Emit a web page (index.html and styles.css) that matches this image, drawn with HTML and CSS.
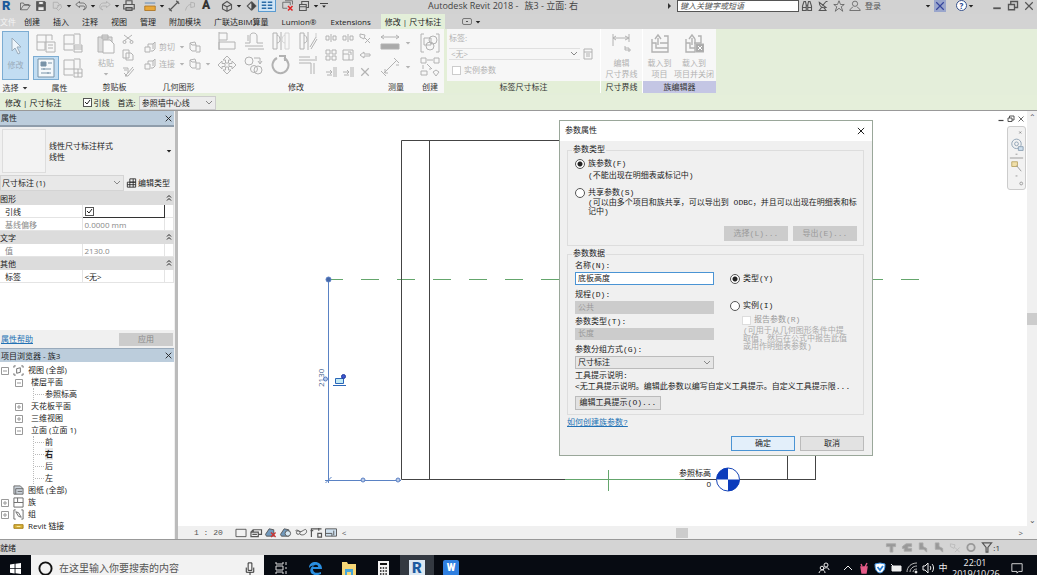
FILE: index.html
```html
<!DOCTYPE html>
<html lang="zh-CN">
<head>
<meta charset="utf-8">
<title>Autodesk Revit 2018 - 族3 - 立面: 右</title>
<link rel="stylesheet" href="styles.css">
</head>
<body>
<svg class="sprite" aria-hidden="true">
  <symbol id="i-open" viewBox="0 0 16 16"><path d="M2 13V4h4l1 2h6v2M2 13h9l4-6H6z"/></symbol>
  <symbol id="i-save" viewBox="0 0 16 16"><path d="M2 2h11l1 1v11H2z" fill="#555"/><path d="M5 2h6v4H5zM4 9h8v5H4z" fill="#eee"/></symbol>
  <symbol id="i-sync" viewBox="0 0 16 16"><path d="M3 3h6l2 3-3 5H3zM8 8l5-2 1 4-4 4-3-3"/></symbol>
  <symbol id="i-undo" viewBox="0 0 16 16"><path d="M6 2L1 6l5 4V8h5c3 0 3 4 0 5 6 0 5-9-1-9H6z"/></symbol>
  <symbol id="i-redo" viewBox="0 0 16 16"><path d="M10 2l5 4-5 4V8H5c-3 0-3 4 0 5-6 0-5-9 1-9h4z"/></symbol>
  <symbol id="i-print" viewBox="0 0 16 16"><path d="M4 6V1h8v5M1 6h14v6H1zM4 10h8v4H4z" stroke-width="1.6"/></symbol>
  <symbol id="i-measure" viewBox="0 0 16 16"><path d="M1 4h14" stroke="#3b70a8"/><path d="M1 8h14v6H1z" fill="#e8a83a" stroke="#a66b18"/></symbol>
  <symbol id="i-dim" viewBox="0 0 16 16"><path d="M2 14L14 2M1 11l4 4M11 1l4 4" stroke-width="1.6"/></symbol>
  <symbol id="i-tag" viewBox="0 0 16 16"><path d="M2 14c1-5 4-8 7-8M9 3l5 1v5l-5 1z"/></symbol>
  <symbol id="i-cube" viewBox="0 0 16 16"><path d="M2 6l6-4 6 4v6l-6 3-6-3zM8 8v6M2 6l6 3 6-3" stroke-width="1.5"/></symbol>
  <symbol id="i-section" viewBox="0 0 16 16"><path d="M8 3l5 5-5 5-5-5z" stroke-width="1.5"/><path d="M9 2l6 6-6 6z" fill="#444"/></symbol>
  <symbol id="i-lines" viewBox="0 0 16 16"><path d="M1 3h6M1 7h6M1 11h6M9 3h6M9 7h6M9 11h6" stroke="#2b6ca8" stroke-width="2"/></symbol>
  <symbol id="i-closewin" viewBox="0 0 16 16"><path d="M1 3h10v4M1 3v8h6M4 1h10v5"/><path d="M8 8l6 6M14 8l-6 6" stroke="#d22" stroke-width="2"/></symbol>
  <symbol id="i-switch" viewBox="0 0 16 16"><path d="M2 6h9v8H2zM5 6V2h9v8h-3M2 9h9" stroke-width="1.4"/></symbol>
  <symbol id="i-down" viewBox="0 0 8 8"><path d="M1 2.5h6L4 6z" fill="currentColor" stroke="none"/></symbol>
  <symbol id="i-up2" viewBox="0 0 8 8"><path d="M2 3.500L4 1.500l2 2M2 6.500l2-2 2 2"/></symbol>
  <symbol id="i-bino" viewBox="0 0 16 16"><path d="M2 14V8l2-6h2l1 5v7zM14 14V8l-2-6h-2L9 7v7zM7 7h2M2 10h5M9 10h5" stroke-width="1.5"/></symbol>
  <symbol id="i-dish" viewBox="0 0 16 16"><path d="M3 3c0 6 4 8 9 7zM7 8l5-6M12 2h2M6 10l-3 4h9l-3-4" stroke-width="1.4"/></symbol>
  <symbol id="i-star" viewBox="0 0 16 16"><path d="M8 1l2 5h5l-4 3 2 6-5-4-5 4 2-6-4-3h5z"/></symbol>
  <symbol id="i-user" viewBox="0 0 16 16"><circle cx="8" cy="5" r="3.5"/><path d="M5 9c0 2-4 2-4 5h14c0-3-4-3-4-5"/></symbol>
  <symbol id="i-x" viewBox="0 0 16 16"><path d="M3 3l10 10M13 3L3 13" stroke-width="1.6"/></symbol>
  <symbol id="i-restore" viewBox="0 0 16 16"><path d="M2 6h8v7H2zM5 6V2h9v8h-4" stroke-width="1.8"/></symbol>
  <symbol id="i-min" viewBox="0 0 16 16"><path d="M3 11h10" stroke-width="2.4"/></symbol>
  <symbol id="i-cursor" viewBox="0 0 20 20"><path d="M6 2v13l3-3 3 6 2-1-3-6h4z" fill="#eef5fb"/></symbol>
  <symbol id="i-typeprop" viewBox="0 0 20 20"><path d="M1 2h9v7H1zM10 2h6v5M1 9v8h8V9M10 9h9v10h-9zM12 12h5M12 15h5"/></symbol>
  <symbol id="i-famcat" viewBox="0 0 20 20"><path d="M1 2h10v9H1zM11 1h6v10M1 11v6h9M11 12h8v7h-8zM11 14h8M11 16h8"/></symbol>
  <symbol id="i-props" viewBox="0 0 20 20"><path d="M2 1h16v18H2z" fill="#f4f8fb"/><path d="M5 4h5v4H5z" fill="#7893a8"/><path d="M12 5h4M5 11h10M5 15h10M8 10v2M12 14v2"/></symbol>
  <symbol id="i-famtype" viewBox="0 0 20 20"><path d="M1 2h10v9H1zM11 1h6v9M1 11v6h9M11 11h8v8h-8zM15 11v8M11 15h8"/></symbol>
  <symbol id="i-paste" viewBox="0 0 20 20"><path d="M2 3h14v15H2zM6 1h6v4H6z" fill="#ddd"/><path d="M7 6h7l4 4v9H7z" fill="#fafafa"/></symbol>
  <symbol id="i-cut" viewBox="0 0 12 12"><path d="M2 2l8 6M10 2L2 8"/><circle cx="2.500" cy="9" r="1.500"/><circle cx="9.500" cy="9" r="1.500"/></symbol>
  <symbol id="i-copyc" viewBox="0 0 12 12"><path d="M1 1h6v8H1zM4 4h5l2 2v5H4z" fill="#f8f8f8"/></symbol>
  <symbol id="i-calc" viewBox="0 0 12 12"><path d="M2 1h8v10H2zM2 4h8M4 6h4M4 8h4"/></symbol>
  <symbol id="i-match" viewBox="0 0 12 12"><path d="M1 3h5v5M2 5h3M11 2L5 9l-2 2h3l6-7M2 8l3 3"/></symbol>
  <symbol id="i-cope" viewBox="0 0 12 12"><path d="M4 3h5l2-2v7L9 10H7M4 3v3M1 6h5v5H1zM9 3v5"/></symbol>
  <symbol id="i-join" viewBox="0 0 12 12"><path d="M1 2l5-1 1 3v6H3L1 8zM7 5h4v6H7M1 2l2 2h4"/></symbol>
  <symbol id="i-align" viewBox="0 0 20 20"><path d="M2 1v18M2 2h8v7H2M2 11h16v7H2z"/></symbol>
  <symbol id="i-offset" viewBox="0 0 20 20"><path d="M1 12h5V5c0-4 7-4 7 0v7h6M1 15h18M4 18h16M4 10V4"/></symbol>
  <symbol id="i-mirror" viewBox="0 0 20 20"><path d="M2 2v16h4V2zM6 4c4 1 4 8 0 8M10 1v18"/><path d="M18 2v16h-4V2zM14 4c-4 1-4 8 0 8" stroke="#d4d4d4"/></symbol>
  <symbol id="i-mirrord" viewBox="0 0 20 20"><path d="M2 2v16h4V2zM6 4c4 1 4 8 0 8M10 1v18M18 6l-6 10M19 8l-6 10"/><path d="M18 2v5" stroke="#ccc"/></symbol>
  <symbol id="i-move" viewBox="0 0 20 20"><path d="M10 1l4 4h-2.500v3h-3V5H6zM10 19l4-4h-2.500v-3h-3v3H6zM1 10l4-4v2.500h3v3H5V14zM19 10l-4-4v2.500h-3v3h3V14z"/></symbol>
  <symbol id="i-copy" viewBox="0 0 20 20"><circle cx="5" cy="6" r="4"/><path d="M10 3h6v5M14 6l2 3 2-3"/><circle cx="10" cy="14" r="3.500"/><circle cx="14" cy="15" r="4"/></symbol>
  <symbol id="i-rotate" viewBox="0 0 20 20"><path d="M6 3a8 8 0 1 0 7 0M8 1h6v5" stroke-width="2"/></symbol>
  <symbol id="i-trim" viewBox="0 0 20 20"><path d="M1 5h18M1 8h12v11M16 8v11M1 2h11M18 1v3"/></symbol>
  <symbol id="i-split" viewBox="0 0 12 12"><path d="M1 4h3v4H1zM8 4h3v4H8zM6 2v8"/></symbol>
  <symbol id="i-pin" viewBox="0 0 12 12"><path d="M1 2l5 1-1 4-4-2zM6 6l5 5M11 6l-5 5"/></symbol>
  <symbol id="i-array" viewBox="0 0 12 12"><path d="M1 1h4v4H1zM7 1h4v4H7zM1 7h4v4H1zM7 7h4v4H7z"/></symbol>
  <symbol id="i-edittype" viewBox="0 0 12 12"><path d="M1 5h10v6H1zM1 8h10M4 5v6M8 1v10M4 1h7v4H4z"/></symbol>
  <symbol id="i-scale" viewBox="0 0 12 12"><path d="M1 1h10v10H1zM1 5h6v6M6 3h3v3"/></symbol>
  <symbol id="i-left" viewBox="0 0 12 12"><path d="M1 6l4-3v2h6v2H5v2z"/></symbol>
  <symbol id="i-ext" viewBox="0 0 12 12"><path d="M1 6h6M5 4l2 2-2 2M9 1v10M11 1v10M2 9h5"/></symbol>
  <symbol id="i-meas" viewBox="0 0 20 20"><path d="M1 4h18M4 2L1 4l3 2M16 2l3 2-3 2"/><path d="M1 11h18v5H1z" fill="#aaa"/></symbol>
  <symbol id="i-mdim" viewBox="0 0 20 20"><path d="M3 17L17 3M1 14l5 5M14 1l5 5M16 8l3 0M5 12v4h3"/></symbol>
  <symbol id="i-group" viewBox="0 0 20 20"><path d="M4 1H1v18h3M16 1h3v18h-3M4 5h7v7H4z"/><circle cx="13" cy="7" r="4"/><circle cx="10" cy="13" r="4"/></symbol>
  <symbol id="i-similar" viewBox="0 0 20 20"><path d="M1 1h5v5H1zM14 1h5v5h-5zM7 3h6M7 7l5 5M3 8v4M1 14h6v4H1zM10 13v-2M13 15l3-2 3 2-3 4z"/></symbol>
  <symbol id="i-witness" viewBox="0 0 20 20"><path d="M1 1v12M17 1v8M1 5h16M4 3L1 5l3 2M13 3l4 2-4 2M13 15h4v4M13 13v4h6"/></symbol>
  <symbol id="i-load" viewBox="0 0 20 20"><path d="M2 6v13h16V6M14 3h4v7h-8M2 10h4v5h12M8 12V5M5 6l3-4 3 4" stroke-width="1.4"/></symbol>
  <symbol id="i-loadx" viewBox="0 0 20 20"><path d="M2 6v13h9V6M14 3h3v7h-7M2 10h4v5h5M8 12V5M5 6l3-4 3 4" stroke-width="1.4"/><path d="M12 11h8v8h-8z" fill="#aaa"/><path d="M14 13l4 4M18 13l-4 4" stroke="#fff"/></symbol>
  <symbol id="i-plus" viewBox="0 0 8 8"><path d="M.5.5h7v7h-7zM2 4h4M4 2v4"/></symbol>
  <symbol id="i-minus" viewBox="0 0 8 8"><path d="M.5.5h7v7h-7zM2 4h4"/></symbol>
  <symbol id="i-views" viewBox="0 0 12 12"><path d="M1 3V1h2M9 1h2v2M11 9v2H9M3 11H1V9M4 4l4-1v5l-4 1z"/></symbol>
  <symbol id="i-sheets" viewBox="0 0 12 12"><path d="M1 1h7l3 3v6H1zM3 10V4h8M5 7h5" fill="#ccd4dc"/></symbol>
  <symbol id="i-fam" viewBox="0 0 12 12"><path d="M1 1h10v10H1zM5 1v5h6M1 6h4"/></symbol>
  <symbol id="i-grp" viewBox="0 0 12 12"><path d="M3 1H1v10h2M9 1h2v10H9M3 3l3 1 3 5-3-1z"/></symbol>
  <symbol id="i-link" viewBox="0 0 12 12"><path d="M1 4h10v4H1z" fill="#d8b23a" stroke="#a57f18"/><path d="M4 6h4" stroke="#fff0a8"/></symbol>
  <symbol id="i-paper" viewBox="0 0 14 12"><path d="M1.500 2.500h11v8h-11z" fill="#f2f2f2"/></symbol>
  <symbol id="i-box" viewBox="0 0 14 12"><path d="M1.500 5.500h8v5h-8zM4 5V3h9v5h-3M4 3l-2 2M3 8h5" stroke-width="1.300"/></symbol>
  <symbol id="i-shade" viewBox="0 0 14 12"><path d="M1 8l4-6 5 1v7H2z" fill="#7199bd"/><path d="M7 6l5 5M12 6l-5 5" stroke="#c33" stroke-width="1.500"/></symbol>
  <symbol id="i-crop" viewBox="0 0 14 12"><path d="M1 8l4-6 5 1v7H2z" fill="#7199bd"/><circle cx="9" cy="7" r="3" fill="#d7e9f5"/></symbol>
  <symbol id="i-glass" viewBox="0 0 14 12"><path d="M1 4c3-2 3 2 6 1s5-4 6-1-4 6-7 4"/><circle cx="4" cy="6" r="2"/></symbol>
  <symbol id="i-region" viewBox="0 0 14 12"><path d="M2 11V2h11M1 4h3M10 1v3M9 7h4v4H9z" stroke-width="1.300"/></symbol>
  <symbol id="i-screen" viewBox="0 0 14 12"><path d="M1 2h12v8H1z" fill="#cfe0ee"/><path d="M1 7h7v3M10 4v5"/></symbol>
  <symbol id="i-filter" viewBox="0 0 12 12"><path d="M1 1h10L7 6v5H5V6z" stroke-width="1.300"/></symbol>
  <symbol id="i-fsel" viewBox="0 0 12 12"><path d="M1 2h10v3H8v6H5V5H1z" fill="#999" stroke="#aaa"/></symbol>
  <symbol id="i-under" viewBox="0 0 12 12"><path d="M1 5l4-3h6v3H7v2h4v3H3V7H1z" fill="#999" stroke="#aaa"/></symbol>
  <symbol id="i-pins" viewBox="0 0 12 12"><path d="M2 1h4v4l4 2v4L7 8H2z" fill="#999" stroke="#aaa"/></symbol>
  <symbol id="i-ring" viewBox="0 0 12 12"><circle cx="6" cy="6" r="4" stroke="#999" stroke-width="2"/></symbol>
</svg>

<div class="app">
  <header class="titlebar">
    <div class="quick">
      <span class="logo">R</span>
      <button class="qb" aria-label="打开"><svg><use href="#i-open"/></svg></button>
      <button class="qb" aria-label="保存"><svg><use href="#i-save"/></svg></button>
      <button class="qb dim" aria-label="同步"><svg><use href="#i-sync"/></svg></button>
      <svg class="arr"><use href="#i-down"/></svg>
      <button class="qb" aria-label="放弃"><svg><use href="#i-undo"/></svg></button>
      <svg class="arr"><use href="#i-down"/></svg>
      <button class="qb dim" aria-label="重做"><svg><use href="#i-redo"/></svg></button>
      <svg class="arr"><use href="#i-down"/></svg>
      <button class="qb" aria-label="打印"><svg><use href="#i-print"/></svg></button>
      <i class="sep"></i>
      <button class="qb" aria-label="测量"><svg><use href="#i-measure"/></svg></button>
      <svg class="arr"><use href="#i-down"/></svg>
      <button class="qb" aria-label="尺寸"><svg><use href="#i-dim"/></svg></button>
      <button class="qb dim" aria-label="标记"><svg><use href="#i-tag"/></svg></button>
      <button class="qb text-a">A</button>
      <i class="sep"></i>
      <button class="qb" aria-label="三维"><svg><use href="#i-cube"/></svg></button>
      <svg class="arr"><use href="#i-down"/></svg>
      <button class="qb" aria-label="剖面"><svg><use href="#i-section"/></svg></button>
      <button class="qb on" aria-label="细线"><svg><use href="#i-lines"/></svg></button>
      <i class="sep"></i>
      <button class="qb" aria-label="关闭隐藏窗口"><svg><use href="#i-closewin"/></svg></button>
      <button class="qb" aria-label="切换窗口"><svg><use href="#i-switch"/></svg></button>
      <svg class="arr"><use href="#i-down"/></svg>
      <svg class="arr more"><use href="#i-down"/></svg>
    </div>
    <h1 class="app-title"><span>Autodesk Revit 2018 -</span><span>族3 - 立面: 右</span></h1>
    <div class="info">
      <i class="tri"></i>
      <input class="find" type="text" placeholder="键入关键字或短语" aria-label="搜索">
      <button class="qb" aria-label="查找"><svg><use href="#i-bino"/></svg></button>
      <button class="qb" aria-label="通讯中心"><svg><use href="#i-dish"/></svg></button>
      <button class="qb" aria-label="收藏夹"><svg><use href="#i-star"/></svg></button>
      <button class="qb" aria-label="用户"><svg><use href="#i-user"/></svg></button>
      <button class="login">登录</button>
      <svg class="arr"><use href="#i-down"/></svg>
      <button class="qb exch" aria-label="Exchange"><svg><use href="#i-x"/></svg></button>
      <button class="help">?</button>
      <svg class="arr"><use href="#i-down"/></svg>
      <div class="winctl">
        <button class="qb" aria-label="最小化"><svg><use href="#i-min"/></svg></button>
        <button class="qb" aria-label="还原"><svg><use href="#i-restore"/></svg></button>
        <button class="qb" aria-label="关闭"><svg><use href="#i-x"/></svg></button>
      </div>
    </div>
  </header>

  <nav class="tabs">
    <button class="file">文件</button><button>创建</button><button>插入</button><button>注释</button><button>视图</button><button>管理</button><button>附加模块</button><button>广联达BIM算量</button><button>Lumion®</button><button class="ext">Extensions</button><button class="active">修改 | 尺寸标注</button>
    <button class="tabmode" aria-label="最小化功能区"><i></i><svg class="arr"><use href="#i-down"/></svg></button>
  </nav>

  <section class="ribbon">
    <div class="panel p-select"><div class="body"><button class="modify"><svg class="big"><use href="#i-cursor"/></svg>修改</button></div><h2>选择 <svg class="arr"><use href="#i-down"/></svg></h2></div>
    <div class="panel p-props"><div class="body grid2">
      <button aria-label="类型属性"><svg class="big"><use href="#i-typeprop"/></svg></button><button aria-label="族类别"><svg class="big"><use href="#i-famcat"/></svg></button>
      <button class="on" aria-label="属性"><svg class="big"><use href="#i-props"/></svg></button><button aria-label="族类型"><svg class="big"><use href="#i-famtype"/></svg></button></div><h2>属性</h2></div>
    <div class="panel p-clip"><div class="body">
      <button class="tall"><svg class="big"><use href="#i-paste"/></svg>粘贴<svg class="arr"><use href="#i-down"/></svg></button>
      <div class="stack3"><svg class="sm"><use href="#i-cut"/></svg><svg class="sm"><use href="#i-copyc"/></svg><svg class="sm"><use href="#i-match"/></svg></div></div><h2>剪贴板</h2></div>
    <div class="panel p-geo"><div class="body geo">
      <div><svg class="sm"><use href="#i-cope"/></svg><span>剪切</span><svg class="arr"><use href="#i-down"/></svg><svg class="sm"><use href="#i-join"/></svg></div>
      <div><svg class="sm"><use href="#i-cope"/></svg><span>连接</span><svg class="arr"><use href="#i-down"/></svg><svg class="sm"><use href="#i-join"/></svg><svg class="arr"><use href="#i-down"/></svg></div></div><h2>几何图形</h2></div>
    <div class="panel p-mod"><div class="body">
      <div class="grid4"><svg class="big"><use href="#i-align"/></svg><svg class="big"><use href="#i-offset"/></svg><svg class="big"><use href="#i-mirror"/></svg><svg class="big"><use href="#i-mirrord"/></svg><svg class="big"><use href="#i-move"/></svg><svg class="big"><use href="#i-copy"/></svg><svg class="big"><use href="#i-rotate"/></svg><svg class="big"><use href="#i-trim"/></svg></div>
      <div class="grid3"><svg class="sm"><use href="#i-split"/></svg><svg class="sm"><use href="#i-split"/></svg><svg class="sm"><use href="#i-pin"/></svg><svg class="sm"><use href="#i-array"/></svg><svg class="sm"><use href="#i-scale"/></svg><svg class="sm"><use href="#i-left"/></svg><svg class="sm"><use href="#i-ext"/></svg><svg class="sm"><use href="#i-ext"/></svg><svg class="sm heavy"><use href="#i-x"/></svg></div></div><h2>修改</h2></div>
    <div class="panel p-meas"><div class="body two"><div><svg class="big"><use href="#i-meas"/></svg><svg class="arr"><use href="#i-down"/></svg></div><div><svg class="big"><use href="#i-mdim"/></svg><svg class="arr"><use href="#i-down"/></svg></div></div><h2>测量</h2></div>
    <div class="panel p-make"><div class="body two"><svg class="big"><use href="#i-group"/></svg><svg class="big"><use href="#i-similar"/></svg></div><h2>创建</h2></div>
    <div class="panel ctx p-label"><div class="body form">
      <label for="lab">标签:</label>
      <div class="labrow"><select id="lab" disabled><option>&lt;无&gt;</option></select><svg class="sm"><use href="#i-calc"/></svg></div>
      <label class="chk"><input type="checkbox" disabled>实例参数</label></div><h2>标签尺寸标注</h2></div>
    <div class="panel ctx p-wit"><div class="body"><button class="tall"><svg class="big"><use href="#i-witness"/></svg>编辑<br>尺寸界线</button></div><h2>尺寸界线</h2></div>
    <div class="panel fam p-fam"><div class="body"><button class="tall"><svg class="big"><use href="#i-load"/></svg>载入到<br>项目</button><button class="tall"><svg class="big"><use href="#i-loadx"/></svg>载入到<br>项目并关闭</button></div><h2>族编辑器</h2></div>
  </section>

  <div class="options">
    <span class="ctxname">修改 | 尺寸标注</span>
    <label><input type="checkbox" checked>引线</label>
    <label for="pref">首选:</label>
    <select id="pref"><option>参照墙中心线</option></select>
  </div>

  <main class="work">
    <aside class="side">
      <header class="palette"><span>属性</span><button aria-label="关闭"><svg><use href="#i-x"/></svg></button></header>
      <div class="typesel"><div class="thumb"></div><p>线性尺寸标注样式<br>线性</p><svg class="arr"><use href="#i-down"/></svg></div>
      <div class="instrow"><select aria-label="实例"><option>尺寸标注 (1)</option></select><button><svg class="sm"><use href="#i-edittype"/></svg>编辑类型</button></div>
      <div class="props">
        <table>
          <colgroup><col class="c-name"><col><col class="c-end"></colgroup>
          <tbody>
          <tr class="sec"><th colspan="2">图形</th><td><svg><use href="#i-up2"/></svg></td></tr>
          <tr><th>引线</th><td class="cur"><input type="checkbox" checked aria-label="引线"></td><td></td></tr>
          <tr class="off"><th>基线偏移</th><td>0.0000 mm</td><td></td></tr>
          <tr class="sec"><th colspan="2">文字</th><td><svg><use href="#i-up2"/></svg></td></tr>
          <tr class="off"><th>值</th><td>2130.0</td><td></td></tr>
          <tr class="sec"><th colspan="2">其他</th><td><svg><use href="#i-up2"/></svg></td></tr>
          <tr><th>标签</th><td>&lt;无&gt;</td><td></td></tr>
          </tbody>
        </table>
      </div>
      <div class="applyrow"><a href="#help">属性帮助</a><button disabled>应用</button></div>
      <header class="palette browser"><span>项目浏览器 - 族3</span><button aria-label="关闭"><svg><use href="#i-x"/></svg></button></header>
      <ul class="tree">
        <li><svg class="tw"><use href="#i-minus"/></svg><svg class="ti"><use href="#i-views"/></svg>视图 (全部)
          <ul>
            <li><svg class="tw"><use href="#i-minus"/></svg>楼层平面<ul class="leaf"><li>参照标高</li></ul></li>
            <li><svg class="tw"><use href="#i-plus"/></svg>天花板平面</li>
            <li><svg class="tw"><use href="#i-plus"/></svg>三维视图</li>
            <li><svg class="tw"><use href="#i-minus"/></svg>立面 (立面 1)<ul class="leaf"><li>前</li><li><b>右</b></li><li>后</li><li>左</li></ul></li>
          </ul></li>
        <li><i class="tw"></i><svg class="ti"><use href="#i-sheets"/></svg>图纸 (全部)</li>
        <li><svg class="tw"><use href="#i-plus"/></svg><svg class="ti"><use href="#i-fam"/></svg>族</li>
        <li><svg class="tw"><use href="#i-plus"/></svg><svg class="ti"><use href="#i-grp"/></svg>组</li>
        <li><i class="tw"></i><svg class="ti"><use href="#i-link"/></svg>Revit 链接</li>
      </ul>
    </aside>

    <section class="view">
      <div class="canvas">
        <svg class="drawing">
          <g transform="translate(-178 -111)">
            <path class="ref" d="M329 279.500h14M361 279.500h560" stroke-dasharray="18 18"/>
            <path class="ink" d="M560 140.500H401.500V479.500H816M429.500 140v340M787.500 450v30M815.500 450v30"/>
            <path class="ref" d="M565 479.500h120M608.500 470v21"/>
            <path class="dimline" d="M328.500 279v204M325 480.500h76M325.500 483l6-6"/>
            <circle class="grip solid" cx="328.500" cy="279.500" r="2.500"/>
            <circle class="grip" cx="363" cy="480" r="2"/><circle class="grip" cx="398" cy="480" r="2"/>
            <circle class="grip" cx="325.500" cy="379" r="2"/>
            <path class="lock" d="M335.500 378.500h8v5h-8zM333 385.500h13"/><circle cx="343.500" cy="376.500" r="2" class="lockdot"/>
            <text class="dimtext" transform="translate(324 387) rotate(-90)">2130</text>
            <circle class="lvl" cx="728" cy="479.500" r="11.500"/>
            <path class="lvlfill" d="M728 479.500V468a11.500 11.500 0 0 0-11.500 11.500zM728 479.500V491a11.500 11.500 0 0 0 11.500-11.500z"/>
            <text class="lvltext" x="711" y="476" text-anchor="end">参照标高</text>
            <text class="lvltext" x="711" y="487" text-anchor="end">0</text>
          </g>
        </svg>
        <div class="mdi"><svg><use href="#i-min"/></svg><svg><use href="#i-restore"/></svg><svg><use href="#i-x"/></svg></div>
        <div class="navbar">
          <svg viewBox="0 0 18 64"><path d="M12 4l2 2m0-2l-2 2" stroke="#888"/><circle cx="9" cy="17" r="5" stroke="#8fa3b5"/><circle cx="9" cy="17" r="2" stroke="#8fa3b5"/><path d="M11 20h5v4h-5z" fill="#cfe0ee" stroke="#8fa3b5"/><path d="M8 28h2M8 51h2M2 32h14" stroke="#999"/><path d="M4 36h6v5H4z" fill="#f0dfa8" stroke="#bba86a"/><path d="M9 40l5 6" stroke="#999"/><circle cx="14" cy="59" r="1.500" stroke="#999"/></svg>
        </div>
      </div>
      <div class="vscroll"><button aria-label="上">⌃</button><i></i><button aria-label="下">⌄</button></div>
      <div class="viewbar">
        <span class="scale">1 : 20</span>
        <svg><use href="#i-paper"/></svg><svg><use href="#i-box"/></svg><svg><use href="#i-shade"/></svg><svg><use href="#i-crop"/></svg><svg><use href="#i-glass"/></svg><svg><use href="#i-region"/></svg><svg><use href="#i-screen"/></svg>
        <span class="lt">&lt;</span>
        <div class="hscroll"><i></i></div>
        <span class="gt">&gt;</span>
      </div>

      <form class="dialog" role="dialog" aria-labelledby="dt">
        <header><h2 id="dt">参数属性</h2><button type="button" aria-label="关闭"><svg><use href="#i-x"/></svg></button></header>
        <fieldset class="ptype">
          <legend>参数类型</legend>
          <label><input type="radio" name="k" checked>族参数(F)</label>
          <p>(不能出现在明细表或标记中)</p>
          <label class="second"><input type="radio" name="k">共享参数(S)</label>
          <p class="tight">(可以由多个项目和族共享，可以导出到 ODBC，并且可以出现在明细表和标记中)</p>
          <div class="btns"><button type="button" disabled>选择(L)...</button><button type="button" disabled>导出(E)...</button></div>
        </fieldset>
        <fieldset class="pdata">
          <legend>参数数据</legend>
          <div class="cols">
            <div class="fields">
              <label for="nm">名称(N):</label><input id="nm" type="text" value="底板高度">
              <label for="dc">规程(D):</label><select id="dc" disabled><option>公共</option></select>
              <label for="pt">参数类型(T):</label><select id="pt" disabled><option>长度</option></select>
              <label for="gp">参数分组方式(G):</label><select id="gp"><option>尺寸标注</option></select>
            </div>
            <div class="kinds">
              <label><input type="radio" name="t" checked>类型(Y)</label>
              <label><input type="radio" name="t">实例(I)</label>
              <label class="rep"><input type="checkbox" disabled>报告参数(R)</label>
              <p>(可用于从几何图形条件中提取值，然后在公式中报告此值或用作明细表参数)</p>
            </div>
          </div>
          <p class="tip">工具提示说明:</p>
          <p class="desc">&lt;无工具提示说明。编辑此参数以编写自定义工具提示。自定义工具提示限...</p>
          <button type="button" class="edit">编辑工具提示(O)...</button>
        </fieldset>
        <a href="#how">如何创建族参数?</a>
        <footer><button type="button" class="ok">确定</button><button type="button">取消</button></footer>
      </form>
    </section>
  </main>

  <div class="status"><span>就绪</span><div class="sicons"><svg><use href="#i-fsel"/></svg><svg><use href="#i-under"/></svg><svg><use href="#i-pins"/></svg><svg><use href="#i-pins"/></svg><svg class="faint"><use href="#i-pin"/></svg><svg><use href="#i-ring"/></svg><svg class="flt"><use href="#i-filter"/></svg><span>:1</span></div></div>

  <footer class="taskbar">
    <button class="start" aria-label="开始"><svg viewBox="0 0 12 12"><path d="M0 1.500l5-.7v5H0zM6 .7L12 0v5.800H6zM0 6.600h5v4.800l-5-.7zM6 6.600h6V12l-6-.8z" fill="#fff" stroke="none"/></svg></button>
    <label class="search"><svg viewBox="0 0 16 16"><circle cx="8" cy="8" r="6.500" stroke="#111" stroke-width="2"/></svg><input type="text" placeholder="在这里输入你要搜索的内容" aria-label="搜索"><svg class="mic" viewBox="0 0 12 16"><path d="M4 2h4v8H4zM2 7v5h8V7M6 12v3" stroke="#222"/></svg></label>
    <div class="apps">
      <button aria-label="任务视图"><svg viewBox="0 0 16 16"><path d="M3 2v2h7V2M3 14v-2h7v2M3 6h7v4H3zM13 2v3M13 7v2M13 11v3" stroke="#ddd"/></svg></button>
      <button aria-label="Edge"><svg viewBox="0 0 16 16"><path d="M2 8c0-8 13-8 13 1H6c0 5 6 4 8 3v2C8 17 2 14 3.500 9 4 7 6 5.500 8 5.500 5 5 3 6.500 2 8zM6.200 7h5c0-3-4.700-3-5 0z" fill="#2a8fe0" stroke="none" fill-rule="evenodd"/></svg></button>
      <button aria-label="文件资源管理器"><svg viewBox="0 0 16 16"><path d="M1 2h5l1 2h8v11H1z" fill="#f6d777" stroke="none"/><path d="M4 15v-6h8v6h-2v-3H6v3z" fill="#46a7dc" stroke="none"/></svg></button>
      <button aria-label="计算器"><svg viewBox="0 0 16 16"><path d="M3 1h11v15H3z" fill="#f4f4f4" stroke="none"/><path d="M5 3h7v2H5z" fill="#111" stroke="none"/><path d="M5 8h7M5 11h7M5 14h7" stroke="#111" stroke-width="1.600" stroke-dasharray="1.500 1.200"/></svg></button>
      <button class="cur"><span class="rv">R</span></button>
      <button><span class="wps">W</span></button>
    </div>
    <div class="tray">
      <svg viewBox="0 0 12 12"><circle cx="8" cy="3" r="2"/><path d="M5 8c1-3 6-3 6 0"/><circle cx="4" cy="6" r="1.800"/><path d="M1 11c1-4 6-4 6 0"/></svg>
      <svg class="chev" viewBox="0 0 12 12"><path d="M2 8l4-4 4 4"/></svg>
      <svg viewBox="0 0 12 12"><path d="M3 5h6l-1 6H4zM7 5l2-4M4 4L3 2" fill="#e45b88" stroke="#e45b88" stroke-width="1.400"/></svg>
      <svg viewBox="0 0 12 12"><path d="M1 2l5-1 5 1c0 5-1 8-5 9C2 10 1 7 1 2z" fill="#fff" stroke="#3d93e6"/><path d="M3.500 5L6 8l3-4" stroke="#2c83da" stroke-width="1.800"/></svg>
      <svg viewBox="0 0 12 12"><path d="M2 4h9v5H2zM1 2l3 3" fill="#eee"/></svg>
      <svg viewBox="0 0 12 12"><path d="M1 10c0-5 4-9 10-9M4 10c0-3 3-6 7-6M7 10c0-2 2-3 4-3" stroke="#bbb"/><circle cx="10" cy="10" r="1" fill="#fff"/></svg>
      <svg viewBox="0 0 12 12"><path d="M1 4h2l3-3v10L3 8H1zM8 4c1 1 1 3 0 4M10 2c2 2 2 6 0 8"/></svg>
      <span class="ime">中</span>
      <time>22:01<br>2019/10/26</time>
      <svg class="note" viewBox="0 0 14 14"><path d="M1 2h12v9H9l-2 2v-2H1z"/></svg>
    </div>
  </footer>
</div>
</body>
</html>
```
FILE: styles.css
```css
* { box-sizing: border-box; }
body { margin: 0; font: 8px/12px "Open Sans", "Noto Sans CJK SC", sans-serif; color: #222; overflow: hidden; }
h1, h2, p, ul, fieldset { margin: 0; padding: 0; font-size: 8px; font-weight: 400; }
button, input, select { font: inherit; color: inherit; margin: 0; padding: 0; border: 0; background: none; border-radius: 0; }
svg { fill: none; stroke: currentColor; flex: none; display: block; }
.sprite { position: absolute; width: 0; height: 0; }
.arr { width: 8px; height: 6px; }
.sm { width: 12px; height: 12px; }
.big { width: 20px; height: 20px; }
select { appearance: none; opacity: 1; background: url("data:image/svg+xml,%3Csvg xmlns='http://www.w3.org/2000/svg' width='10' height='6'%3E%3Cpath d='M1 1l3 3 3-3' fill='none' stroke='%23888'/%3E%3C/svg%3E") no-repeat right center; }
input[type="checkbox"], input[type="radio"] { appearance: none; flex: none; width: 9px; height: 9px; border: 1px solid #555; background: #fff; }
input[type="checkbox"]:checked { background: #fff url("data:image/svg+xml,%3Csvg xmlns='http://www.w3.org/2000/svg' width='7' height='7'%3E%3Cpath d='M1 3l2 2 3-4' fill='none' stroke='%23222'/%3E%3C/svg%3E") no-repeat center; }
input[type="radio"] { border-radius: 50%; }
input[type="radio"]:checked { background: radial-gradient(circle, #222 0 2px, #fff 3px); }

.app { height: 100vh; display: flex; flex-direction: column; background: #d3d3d3; }

.titlebar { height: 14px; flex: none; display: flex; align-items: flex-start; overflow: hidden; background: #d2d2d2; }
.quick, .info, .winctl { display: flex; align-items: center; height: 11px; }
.qb { width: 16px; height: 11px; display: flex; align-items: center; justify-content: center; color: #555; }
.qb svg { width: 12px; height: 12px; }
.qb.dim { color: #aaa; }
.qb.on { background: #cfe4f5; outline: 1px solid #5a9bd0; }
.logo { width: 17px; padding-left: 2px; font: 900 13px/11px "Roboto", sans-serif; color: #1d5a9c; }
.text-a { font: 900 12px/11px "Roboto", sans-serif; color: #333; }
.sep { width: 5px; }
.more { border-top: 1px solid #444; }
.app-title { flex: 1; display: flex; gap: 6px; padding-left: 100px; font-size: 9px; line-height: 11px; white-space: pre; color: #444; }
.tri { border: 3px solid transparent; border-left-color: #333; margin-right: 3px; }
.find { width: 122px; height: 12px; background: #fff; border: 1px solid #555; padding-left: 2px; font-style: italic; line-height: 8px; }
.find::placeholder { color: #555; opacity: 1; }
.login { padding: 0 43px 0 2px; color: #555; }
.exch { color: #35459c; margin-right: 8px; }
.exch svg { stroke-width: 2; background: #9aa6cc; }
.help { width: 11px; height: 11px; border: 1px solid #35508c; border-radius: 50%; background: #fff; font: 700 8px/8px "Open Sans", sans-serif; color: #24448c; }
.winctl { padding-left: 14px; }

.tabs { height: 15px; flex: none; display: flex; align-items: stretch; gap: 5px; color: #222; }
.tabs button { padding: 0 4px; white-space: nowrap; }
.tabs .file { color: #f5f5f5; padding: 0; width: 15px; overflow: visible; text-align: center; }
.tabs .ext { padding: 0 5px; }
.tabs .active { background: #e3efd9; }
.tabs .tabmode { display: flex; align-items: center; gap: 2px; padding-left: 12px; }
.tabmode i { width: 10px; height: 7px; border: 1px solid #777; border-radius: 2px; background: radial-gradient(circle, #555 0 1px, transparent 1px); }

.ribbon { height: 66px; flex: none; display: flex; align-items: flex-start; background: #e4eeda; color: #b2b2b2; }
.panel { height: 64px; display: flex; flex-direction: column; background: #f7f7f7; }
.panel h2 { height: 12px; line-height: 12px; display: flex; align-items: center; justify-content: center; gap: 2px; color: #333; white-space: nowrap; }
.body { flex: 1; display: flex; padding: 2px; justify-content: center; line-height: 10px; }
.p-select { width: 31px; }
.p-props { width: 57px; }
.p-clip { width: 53px; }
.p-geo { width: 75px; }
.p-mod { width: 160px; }
.p-meas { width: 40px; }
.p-make { width: 28px; }
.p-label { width: 156px; }
.p-wit { width: 42px; }
.p-fam { width: 74px; }
.ctx h2 { background: #e4efd8; }
.ctx, .fam { border-left: 1px solid #fff; }
.p-label { border-left: 3px solid #e4efd8; }
.fam h2 { background: #c4c6e4; }
.modify { width: 27px; height: 49px; background: #c2ddf2; border: 1px solid #7cacd2; display: flex; flex-direction: column; align-items: center; gap: 4px; padding-top: 4px; color: #9aabba; }
.grid2 { display: grid; grid-template-columns: 26px 26px; grid-template-rows: 24px 24px; gap: 1px; }
.grid2 button { display: grid; place-items: center; }
.grid2 .on { background: #c2ddf2; border: 1px solid #7cacd2; color: #7893a8; }
.tall { flex: 1; display: flex; flex-direction: column; align-items: center; line-height: 11px; white-space: nowrap; padding-top: 3px; gap: 3px; }
.p-wit .tall, .p-fam .tall { display: block; padding-top: 2px; }
.p-wit svg, .p-fam svg { margin: 0 auto 4px; }
.stack3 { display: flex; flex-direction: column; justify-content: space-between; padding: 2px 5px 2px 0; }
.geo { flex-direction: column; gap: 5px; align-items: flex-start; padding-left: 3px; }
.geo div { display: flex; align-items: center; gap: 3px; }
.grid4 { display: grid; grid-template-columns: repeat(4, 27px); grid-template-rows: 24px 24px; }
.grid3 { display: grid; grid-template-columns: repeat(3, 17px); align-content: space-between; padding: 1px 0; }
.heavy { stroke-width: 2; }
.two { flex-direction: column; align-items: center; gap: 4px; }
.two div { display: flex; align-items: center; gap: 4px; }
.form { flex-direction: column; justify-content: flex-start; padding: 4px 6px 0 2px; gap: 5px; }
.labrow { display: flex; gap: 2px; }
.labrow select { flex: 1; height: 12px; border: solid #e0e0e0; border-width: 1px 0; padding-left: 2px; line-height: 10px; }
.chk { display: flex; align-items: center; gap: 3px; padding-left: 3px; }
.chk input { border-color: #ccc; }

.options { height: 16px; flex: none; display: flex; align-items: center; background: #e5efda; border-bottom: 1px solid #999; padding-left: 5px; }
.ctxname { padding-right: 21px; }
.options label { display: flex; align-items: center; gap: 2px; padding-right: 8px; }
.options label + label { padding-right: 3px; }
.options select { width: 77px; height: 14px; border: 1px solid #ccc; background-color: #ececec; padding-left: 2px; }

.work { flex: 1; min-height: 0; display: flex; border-bottom: 1px solid #999; }
.side { width: 178px; flex: none; display: flex; flex-direction: column; background: #f0f0f0; border-right: 3px solid #bbb; padding-right: 1px; }
.palette { height: 14px; flex: none; display: flex; justify-content: space-between; align-items: center; background: #bccddc; padding: 0 1px; }
.palette button svg { width: 9px; height: 9px; stroke-width: 2; }
.typesel { display: flex; align-items: center; height: 50px; flex: none; border-top: 2px solid #8f9dab; padding: 0 1px 0 2px; line-height: 11px; }
.typesel p { flex: 1; padding-left: 3px; }
.thumb { width: 44px; height: 44px; border: 1px solid #ddd; background: #f3f3f3; }
.instrow { display: flex; height: 16px; flex: none; }
.instrow select { flex: 1; border: 1px solid #d4d4d4; background-color: #e8e8e8; padding-left: 1px; }
.instrow button { width: 50px; display: flex; align-items: center; gap: 1px; padding-left: 2px; }
.instrow svg { width: 11px; height: 10px; }
.props { flex: 1; min-height: 0; background: #fff; }
.props table { width: 100%; table-layout: fixed; border-collapse: collapse; line-height: 11px; }
.c-name { width: 82px; }
.c-end { width: 9px; }
.props tr { height: 13px; }
.props th, .props td { padding: 0 0 0 2px; font-weight: 400; text-align: left; border: 1px solid #e4e4e4; }
.props th { padding-left: 5px; border-left: 0; }
.props td:last-child { padding: 0; }
.props .sec th, .props .sec td { background: #dcdcdc; border-color: #dcdcdc; padding-left: 0; }
.props svg { width: 8px; height: 8px; }
.props .off { color: #888; }
.props .cur { border: 1px solid #333; }
.props input { display: block; }
.applyrow { height: 18px; flex: none; display: flex; justify-content: space-between; align-items: center; padding: 0 1px; }
.applyrow button { width: 54px; height: 13px; background: #ccc; color: #888; line-height: 12px; }
a { color: #2372b5; text-decoration: underline; }
.browser { border-top: 1px solid #9ab; }
.tree, .tree ul { list-style: none; }
.tree { height: 177px; flex: none; background: #fff; padding: 2px 0 0 1px; line-height: 12px; }
.tree li { white-space: nowrap; }
.tree svg, .tree i { display: inline-block; vertical-align: middle; }
.tree .tw { width: 8px; height: 8px; margin: -1px 4px -1px 0; color: #999; }
.tree .ti { width: 11px; height: 11px; margin: -2px 4px -2px 0; color: #666; }
.tree ul { padding-left: 14px; }
.tree ul .tw { margin-right: 8px; }
.tree .leaf { margin-left: 18px; padding-left: 0; border-left: 1px dotted #bbb; }
.tree .leaf li { height: 12px; padding-left: 1px; display: flex; align-items: center; gap: 1px; }
.tree .leaf li::before { content: ""; width: 9px; border-top: 1px dotted #bbb; }
.tree b { background: #e8e8e8; }

.view { position: relative; flex: 1; min-width: 0; display: grid; grid-template: minmax(0, 1fr) 13px / minmax(0, 1fr) 10px; background: #fff; }
.canvas { position: relative; overflow: hidden; }
.drawing { width: 100%; height: 100%; }
.ink { stroke: #444; }
.ref { stroke: #64a66c; }
.dimline { stroke: #5a82c4; }
.grip { fill: #b9cbe8; stroke: #5a7fc4; }
.grip.solid { fill: #4568a8; }
.lock { stroke: #2a66b8; fill: #c4eaf4; }
.lockdot { fill: #3c55d0; stroke: #223c9c; }
.dimtext { font-size: 8px; fill: #44608c; stroke: none; }
.lvl { fill: #fff; stroke: #1746b8; }
.lvlfill { fill: #0c3cbc; stroke: none; }
.lvltext { font-size: 8px; fill: #111; stroke: none; }
.mdi { position: absolute; top: 4px; right: 2px; display: flex; gap: 2px; color: #444; }
.mdi svg { width: 8px; height: 8px; }
.navbar { position: absolute; top: 15px; right: 1px; width: 19px; height: 64px; border: 1px solid #ccc; border-radius: 3px; background: #f2f2f2; }
.navbar svg { width: 17px; height: 62px; }
.vscroll { background: #f0f0f0; display: flex; flex-direction: column; justify-content: space-between; color: #555; }
.vscroll i { height: 12px; background: #ccc; }
.viewbar { grid-column: 1 / -1; display: flex; align-items: center; background: #f0f0f0; color: #555; gap: 1px; }
.viewbar svg { width: 14px; height: 11px; }
.scale { padding: 0 10px 0 16px; font: 8px/12px "Liberation Mono", monospace; white-space: pre; }
.lt { padding-left: 3px; }
.hscroll { flex: 1; display: flex; justify-content: center; }
.hscroll i { width: 12px; height: 10px; background: #ccc; }
.gt { padding-right: 14px; }

.dialog { position: absolute; left: 381px; top: 9px; width: 314px; background: #f0f0f0; border: 1px solid #9aa79a; padding: 0 8px 4px 7px; display: flex; flex-direction: column; font: 8px/10px "Liberation Mono", "Noto Sans CJK SC", monospace; }
.dialog header { height: 20px; margin: 0 -8px 3px -7px; padding: 0 6px 0 5px; background: #fff; display: flex; align-items: center; justify-content: space-between; }
.dialog header svg { width: 10px; height: 10px; }
.dialog fieldset { border: 1px solid #ddd; min-width: 0; padding: 0 6px 4px 7px; }
.dialog legend { padding: 0 1px; margin-left: -3px; line-height: 12px; }
.dialog label { display: flex; align-items: center; gap: 3px; white-space: nowrap; }
.dialog input[type="radio"] { width: 10px; height: 10px; }
.ptype > p { padding: 2px 0 0 13px; }
.ptype > .second { padding-top: 7px; }
.ptype > label:not(.second) { padding-top: 3px; }
.ptype > .tight { padding-top: 0; line-height: 9px; }
.btns, .dialog footer { display: flex; justify-content: flex-end; gap: 5px; }
.btns { padding-top: 10px; }
.dialog button { white-space: nowrap; }
.btns button, footer button { width: 64px; height: 15px; }
.btns button { background: #ccc; color: #999; }
.ptype { margin-bottom: 2px; }
.cols { display: grid; grid-template-columns: 139px 1fr; gap: 16px; }
.fields { display: grid; grid-template-rows: 12px 13px 16px 13px 14px 12px 16px 13px; }
.fields label { align-items: flex-end; padding-bottom: 1px; }
.fields input { border: 1px solid #4a94d4; background: #fff; padding-left: 2px; }
.fields select { border: 1px solid #bbb; background-color: #e6e6e6; padding-left: 2px; line-height: 10px; }
.fields select:disabled { background: #ccc; border-color: #ccc; color: #999; }
.kinds { padding-top: 14px; }
.kinds label + label { padding-top: 17px; }
.kinds label.rep { padding: 4px 0 2px 12px; color: #999; }
.rep input { border-color: #ddd; }
.kinds p { padding-left: 13px; line-height: 8px; color: #aaa; width: 120px; }
.tip { padding-top: 2px; }
.desc { padding-top: 1px; white-space: nowrap; overflow: hidden; }
.edit { width: 86px; height: 14px; margin-top: 4px; border: 1px solid #bbb; background: #e2e2e2; }
.dialog > a { padding-top: 3px; align-self: flex-start; }
.dialog footer { padding-top: 8px; }
.dialog footer button { background: #e2e2e2; border: 1px solid #bbb; }
.dialog footer .ok { background: #e3effa; border-color: #4a94d4; }

.status { height: 15px; flex: none; display: flex; align-items: center; justify-content: space-between; background: #d4d4d4; padding-right: 37px; }
.sicons { display: flex; align-items: center; gap: 4px; color: #777; }
.sicons svg { width: 12px; height: 11px; }
.sicons .faint { color: #bbb; }
.sicons span { color: #333; }
.sicons .flt { color: #555; margin-right: -4px; }

.taskbar { height: 20px; flex: none; display: flex; align-items: flex-start; overflow: hidden; background: #070b12; color: #eee; }
.taskbar > * { height: 26px; flex: none; }
.start { width: 31px; display: grid; place-items: center; }
.start svg { width: 11px; height: 11px; }
.search { width: 233px; background: #f2f2f2; display: flex; align-items: center; padding: 0 8px 0 7px; gap: 6px; color: #444; }
.search svg { width: 15px; height: 15px; }
.search input { flex: 1; min-width: 0; font-size: 10px; line-height: 16px; }
.search input::placeholder { color: #555; opacity: 1; }
.search .mic { width: 12px; }
.apps { display: flex; }
.apps button { width: 34px; height: 26px; display: grid; place-items: center; }
.apps svg { width: 16px; height: 16px; }
.apps .cur { background: #333941; }
.rv, .wps { width: 16px; height: 16px; font: 900 15px/16px "Roboto", sans-serif; }
.rv { background: #dbe7f2; color: #1b5aa0; }
.wps { background: #2f7fe0; color: #fff; font-size: 10px; border-radius: 2px; }
.tray { margin-left: auto; display: flex; align-items: center; gap: 4px; padding-right: 14px; }
.tray svg { width: 12px; height: 12px; }
.tray .chev { margin-left: 8px; }
.ime { width: 10px; font-size: 9px; text-align: center; }
.tray time { width: 46px; text-align: center; font-size: 9px; line-height: 11px; }
.tray .note { margin-left: 9px; }
```
